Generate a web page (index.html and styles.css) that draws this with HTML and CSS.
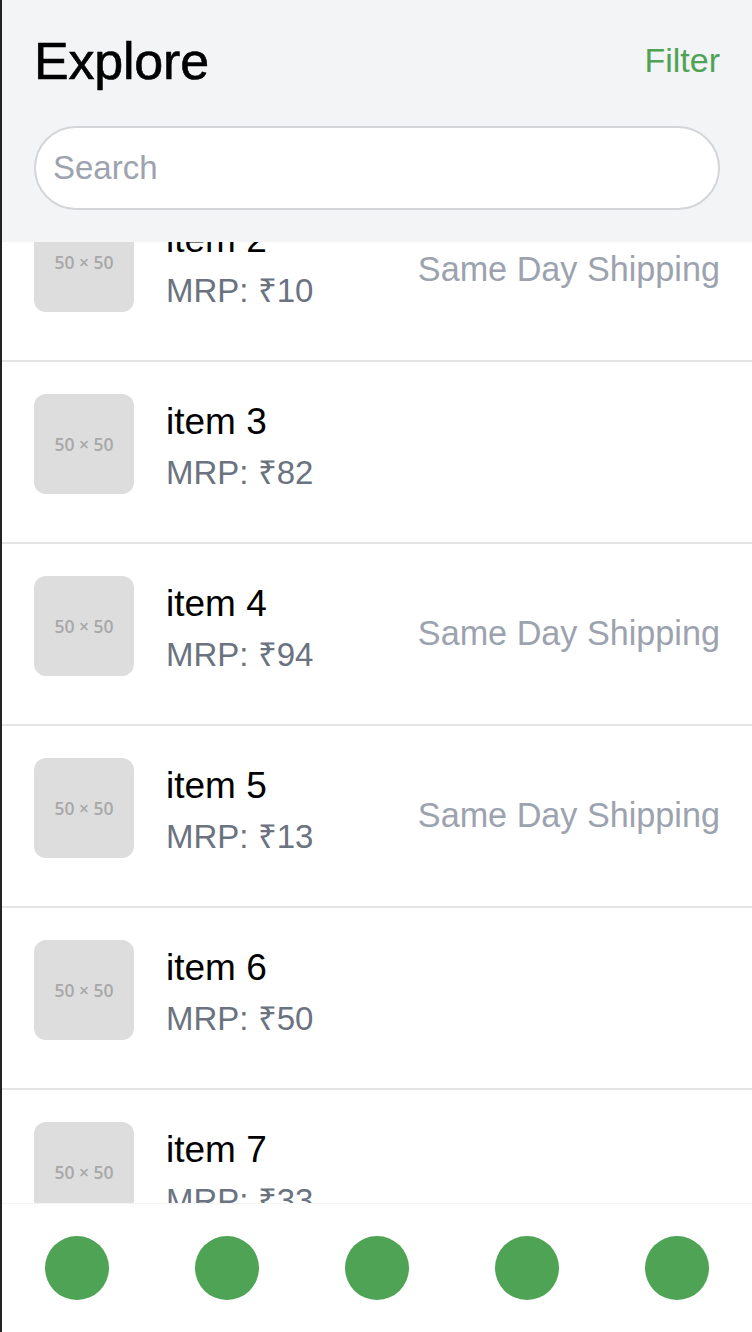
FILE: index.html
```html
<!DOCTYPE html>
<html lang="en">
<head>
<meta charset="utf-8">
<title>Explore</title>
<link rel="stylesheet" href="styles.css">
</head>
<body>
<div class="app">
  <header class="header">
    <div class="header-top">
      <h1 class="title">Explore</h1>
      <span class="filter">Filter</span>
    </div>
    <input class="search" type="text" placeholder="Search">
  </header>
  <main class="list-viewport">
    <ul class="list">
      <li class="row">
        <div class="thumb">50 × 50</div>
        <div class="info"><div class="name">item 2</div><div class="price">MRP: ₹10</div></div>
        <div class="ship">Same Day Shipping</div>
      </li>
      <li class="row">
        <div class="thumb">50 × 50</div>
        <div class="info"><div class="name">item 3</div><div class="price">MRP: ₹82</div></div>
      </li>
      <li class="row">
        <div class="thumb">50 × 50</div>
        <div class="info"><div class="name">item 4</div><div class="price">MRP: ₹94</div></div>
        <div class="ship">Same Day Shipping</div>
      </li>
      <li class="row">
        <div class="thumb">50 × 50</div>
        <div class="info"><div class="name">item 5</div><div class="price">MRP: ₹13</div></div>
        <div class="ship">Same Day Shipping</div>
      </li>
      <li class="row">
        <div class="thumb">50 × 50</div>
        <div class="info"><div class="name">item 6</div><div class="price">MRP: ₹50</div></div>
      </li>
      <li class="row">
        <div class="thumb">50 × 50</div>
        <div class="info"><div class="name">item 7</div><div class="price">MRP: ₹33</div></div>
      </li>
    </ul>
  </main>
  <nav class="nav">
    <span class="nav-item"><span class="dot"></span></span>
    <span class="nav-item"><span class="dot"></span></span>
    <span class="nav-item"><span class="dot"></span></span>
    <span class="nav-item"><span class="dot"></span></span>
    <span class="nav-item"><span class="dot"></span></span>
  </nav>
</div>
</body>
</html>
```
FILE: styles.css
```css
* { box-sizing: border-box; }
html, body { margin: 0; padding: 0; }
body {
  font-family: "Liberation Sans", Arial, Helvetica, sans-serif;
  background: #fff;
  color: #000;
}
.app {
  height: 1332px;
  border-left: 2px solid #222;
  display: flex;
  flex-direction: column;
  overflow: hidden;
}
.header {
  background: #f3f4f6;
  padding: 30px 32px 32px 32px;
  flex: none;
}
.header-top {
  display: flex;
  align-items: center;
  justify-content: space-between;
}
.title {
  margin: 0;
  font-size: 52px;
  line-height: 62px;
  font-weight: 400;
  color: #000;
  letter-spacing: -0.2px;
  -webkit-text-stroke: 0.6px #000;
}
.filter {
  font-size: 34px;
  line-height: 40px;
  color: #4ea355;
  margin-top: -2px;
}
.search {
  display: block;
  width: 100%;
  height: 84px;
  margin-top: 34px;
  border: 2px solid #d4d5d9;
  border-radius: 42px;
  background: #fff;
  padding: 0 17px;
  font-family: inherit;
  font-size: 33px;
  color: #000;
  outline: none;
}
.search::placeholder { color: #9ca3af; }
.list-viewport {
  flex: 1;
  overflow: hidden;
}
.list {
  list-style: none;
  margin: -62px 0 0 0;
  padding: 0;
}
.row {
  display: flex;
  align-items: center;
  height: 182px;
  padding: 32px;
  border-bottom: 2px solid #e5e5e5;
}
.thumb {
  flex: none;
  align-self: flex-start;
  width: 100px;
  height: 100px;
  border-radius: 12px;
  background: #dddddd;
  color: #a8a8a8;
  font-family: "Open Sans", sans-serif;
  font-weight: 600;
  font-size: 17.5px;
  display: flex;
  align-items: center;
  justify-content: center;
}
.info {
  margin-left: 32px;
  flex: 1;
  align-self: flex-start;
}
.name {
  font-size: 37px;
  line-height: 52px;
  color: #000;
  margin-top: 2px;
}
.price {
  font-size: 33px;
  line-height: 50px;
  color: #6b7280;
}
.ship {
  font-size: 34.2px;
  color: #9ca3af;
  margin-top: -2px;
}
.nav {
  flex: none;
  display: flex;
  border-top: 1px solid #f4f4f4;
  padding: 32px 0;
  background: #fff;
}
.nav-item {
  flex: 1;
  display: flex;
  justify-content: center;
}
.dot {
  width: 64px;
  height: 64px;
  border-radius: 50%;
  background: #4ea355;
}
```
